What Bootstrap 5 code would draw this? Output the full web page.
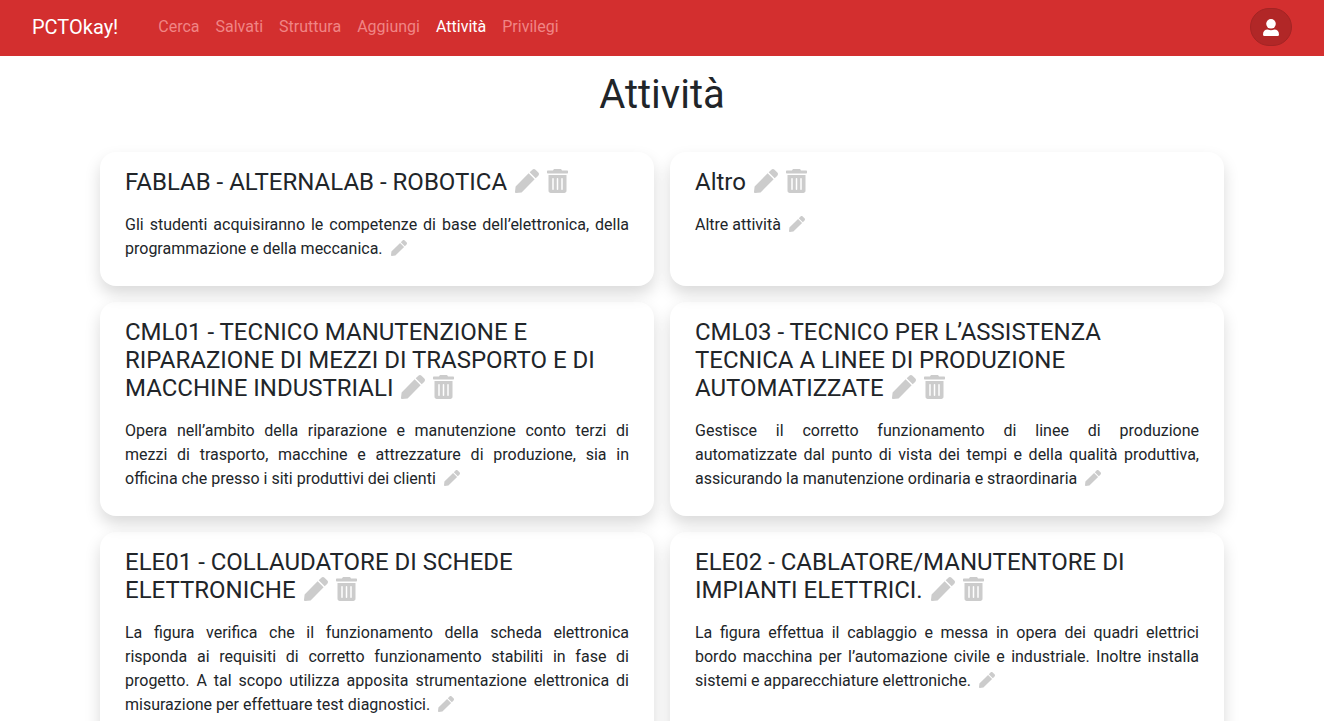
<!DOCTYPE html>
<html lang="it">
<head>
<meta charset="utf-8">
<meta name="viewport" content="width=device-width, initial-scale=1">
<title>PCTOkay! - Attività</title>
<link href="https://cdn.jsdelivr.net/npm/bootstrap@5.3.0/dist/css/bootstrap.min.css" rel="stylesheet">
<style>
body { font-family: Roboto, sans-serif; overflow-x: hidden; }
.topbar { background: #d32f2f; min-height: 56px; padding: 7px 8px 9px; --bs-navbar-color: #f08585; --bs-navbar-hover-color: #fbd0d0; }
.account { background: #b12727; border-color: #a32424; color: #fff; width: 42px; height: 38px; }
.account:hover { background: #9f2020; color: #fff; }
.activity { border-radius: 16px; box-shadow: 0 8px 16px rgba(0, 0, 0, .15); padding: 16px 25px 25px; }
.activity h2 { font-size: 24px; line-height: 28px; margin-bottom: 17px; font-weight: 400; }
.activity p { text-align: justify; line-height: 24px; }
.page-title { font-size: 40px; line-height: 48px; font-weight: 400; margin: 15px 0 33px; }
.tool { background: none; border: 0; padding: 0; color: #ccc; line-height: 1; }
.tool:hover { color: #888; }
.tool svg { display: block; height: 1em; fill: currentColor; }
.account svg { display: block; width: 16px; height: 17px; fill: currentColor; }
h2 .tool { vertical-align: -3px; margin-left: 2px; }
p .tool { vertical-align: -2px; margin-left: 4px; }
</style>
</head>
<body>
<svg class="d-none" aria-hidden="true">
  <symbol id="pen" viewBox="0 0 512 512"><path d="M290.74 93.24l128.02 128.02-277.99 277.99-114.14 12.6C11.35 513.54-1.56 500.62.14 485.34l12.7-114.22 277.9-277.88zm207.2-19.06l-60.11-60.11c-18.75-18.75-49.16-18.75-67.91 0l-56.55 56.55 128.02 128.02 56.55-56.55c18.75-18.76 18.75-49.16 0-67.91z"/></symbol>
  <symbol id="trash" viewBox="0 0 448 512"><path fill-rule="evenodd" d="M32 464c0 26.5 21.5 48 48 48h288c26.5 0 48-21.5 48-48V128H32zM304 208a16 16 0 0 1 32 0v224a16 16 0 0 1-32 0zM208 208a16 16 0 0 1 32 0v224a16 16 0 0 1-32 0zM112 208a16 16 0 0 1 32 0v224a16 16 0 0 1-32 0zM432 32H320l-11.6-23.2A16 16 0 0 0 294.1 0H153.9a16 16 0 0 0-14.3 8.8L128 32H16A16 16 0 0 0 0 48v32a16 16 0 0 0 16 16h416a16 16 0 0 0 16-16V48a16 16 0 0 0-16-16z"/></symbol>
</svg>

<nav class="navbar navbar-expand navbar-dark topbar">
  <div class="container-fluid px-4">
    <a class="navbar-brand py-0 me-4" href="#">PCTOkay!</a>
    <ul class="navbar-nav me-auto ms-2">
      <li class="nav-item"><a class="nav-link" href="#">Cerca</a></li>
      <li class="nav-item"><a class="nav-link" href="#">Salvati</a></li>
      <li class="nav-item"><a class="nav-link" href="#">Struttura</a></li>
      <li class="nav-item"><a class="nav-link" href="#">Aggiungi</a></li>
      <li class="nav-item"><a class="nav-link active" aria-current="page" href="#">Attività</a></li>
      <li class="nav-item"><a class="nav-link" href="#">Privilegi</a></li>
    </ul>
    <button type="button" class="btn account rounded-pill p-0 d-flex align-items-center justify-content-center" aria-label="Account">
      <svg viewBox="0 0 16 17"><circle cx="8" cy="4.8" r="4.8"/><path d="M4.6 10.6Q8 12 11.400 10.600C14 10.600 16 12.600 16 15.400Q16 17 14.600 17H1.400Q0 17 0 15.400C0 12.600 2 10.600 4.600 10.600z"/></svg>
    </button>
  </div>
</nav>

<main class="container-xl px-0">
  <h1 class="page-title text-center">Attività</h1>
  <div class="row g-3 mx-0">
    <div class="col-md-6"><article class="activity h-100">
      <h2>FABLAB - ALTERNALAB - ROBOTICA <button type="button" class="tool" aria-label="Modifica titolo"><svg viewBox="0 0 512 512"><use href="#pen"/></svg></button> <button type="button" class="tool" aria-label="Elimina"><svg viewBox="0 0 448 512"><use href="#trash"/></svg></button></h2>
      <p class="mb-0">Gli studenti acquisiranno le competenze di base dell’elettronica, della programmazione e della meccanica. <button type="button" class="tool" aria-label="Modifica descrizione"><svg viewBox="0 0 512 512"><use href="#pen"/></svg></button></p>
    </article></div>
    <div class="col-md-6"><article class="activity h-100">
      <h2>Altro <button type="button" class="tool" aria-label="Modifica titolo"><svg viewBox="0 0 512 512"><use href="#pen"/></svg></button> <button type="button" class="tool" aria-label="Elimina"><svg viewBox="0 0 448 512"><use href="#trash"/></svg></button></h2>
      <p class="mb-0">Altre attività <button type="button" class="tool" aria-label="Modifica descrizione"><svg viewBox="0 0 512 512"><use href="#pen"/></svg></button></p>
    </article></div>
    <div class="col-md-6"><article class="activity h-100">
      <h2>CML01 - TECNICO MANUTENZIONE E RIPARAZIONE DI MEZZI DI TRASPORTO E DI MACCHINE INDUSTRIALI <button type="button" class="tool" aria-label="Modifica titolo"><svg viewBox="0 0 512 512"><use href="#pen"/></svg></button> <button type="button" class="tool" aria-label="Elimina"><svg viewBox="0 0 448 512"><use href="#trash"/></svg></button></h2>
      <p class="mb-0">Opera nell’ambito della riparazione e manutenzione conto terzi di mezzi di trasporto, macchine e attrezzature di produzione, sia in officina che presso i siti produttivi dei clienti <button type="button" class="tool" aria-label="Modifica descrizione"><svg viewBox="0 0 512 512"><use href="#pen"/></svg></button></p>
    </article></div>
    <div class="col-md-6"><article class="activity h-100">
      <h2>CML03 - TECNICO PER L’ASSISTENZA TECNICA A LINEE DI PRODUZIONE AUTOMATIZZATE <button type="button" class="tool" aria-label="Modifica titolo"><svg viewBox="0 0 512 512"><use href="#pen"/></svg></button> <button type="button" class="tool" aria-label="Elimina"><svg viewBox="0 0 448 512"><use href="#trash"/></svg></button></h2>
      <p class="mb-0">Gestisce il corretto funzionamento di linee di produzione automatizzate dal punto di vista dei tempi e della qualità produttiva, assicurando la manutenzione ordinaria e straordinaria <button type="button" class="tool" aria-label="Modifica descrizione"><svg viewBox="0 0 512 512"><use href="#pen"/></svg></button></p>
    </article></div>
    <div class="col-md-6"><article class="activity h-100">
      <h2>ELE01 - COLLAUDATORE DI SCHEDE ELETTRONICHE <button type="button" class="tool" aria-label="Modifica titolo"><svg viewBox="0 0 512 512"><use href="#pen"/></svg></button> <button type="button" class="tool" aria-label="Elimina"><svg viewBox="0 0 448 512"><use href="#trash"/></svg></button></h2>
      <p class="mb-0">La figura verifica che il funzionamento della scheda elettronica risponda ai requisiti di corretto funzionamento stabiliti in fase di progetto. A tal scopo utilizza apposita strumentazione elettronica di misurazione per effettuare test diagnostici. <button type="button" class="tool" aria-label="Modifica descrizione"><svg viewBox="0 0 512 512"><use href="#pen"/></svg></button></p>
    </article></div>
    <div class="col-md-6"><article class="activity h-100">
      <h2>ELE02 - CABLATORE/MANUTENTORE DI IMPIANTI ELETTRICI. <button type="button" class="tool" aria-label="Modifica titolo"><svg viewBox="0 0 512 512"><use href="#pen"/></svg></button> <button type="button" class="tool" aria-label="Elimina"><svg viewBox="0 0 448 512"><use href="#trash"/></svg></button></h2>
      <p class="mb-0">La figura effettua il cablaggio e messa in opera dei quadri elettrici bordo macchina per l’automazione civile e industriale. Inoltre installa sistemi e apparecchiature elettroniche. <button type="button" class="tool" aria-label="Modifica descrizione"><svg viewBox="0 0 512 512"><use href="#pen"/></svg></button></p>
    </article></div>
  </div>
</main>
<script src="https://cdn.jsdelivr.net/npm/bootstrap@5.3.0/dist/js/bootstrap.bundle.min.js"></script>
</body>
</html>
